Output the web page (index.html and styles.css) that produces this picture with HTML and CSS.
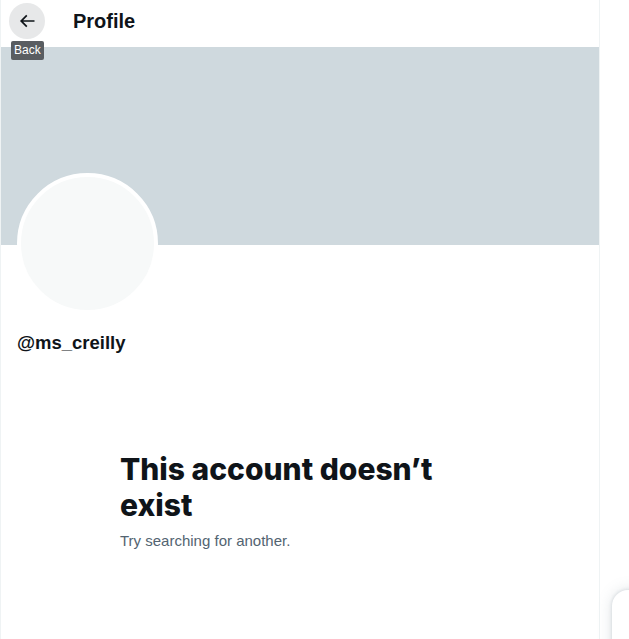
FILE: index.html
```html
<!DOCTYPE html>
<html>
<head>
<meta charset="utf-8">
<link rel="stylesheet" href="styles.css">
</head>
<body>
<div class="page">
  <main class="column">
    <header class="topbar">
      <div class="back-btn">
        <svg viewBox="0 0 24 24" width="20" height="20"><path d="M7.414 13l5.043 5.04-1.414 1.42L3.586 12l7.457-7.46 1.414 1.42L7.414 11H21v2H7.414z" fill="#0f1419"/></svg>
      </div>
      <h2 class="title">Profile</h2>
      <div class="tooltip">Back</div>
    </header>
    <div class="banner"></div>
    <div class="avatar-row">
      <div class="avatar"></div>
    </div>
    <div class="handle">@ms_creilly</div>
    <section class="empty">
      <h1 class="empty-title">This account doesn’t exist</h1>
      <p class="empty-sub">Try searching for another.</p>
    </section>
  </main>
  <div class="drawer"></div>
</div>
</body>
</html>
```

FILE: styles.css
```css
html, body {
  margin: 0;
  padding: 0;
  background: #ffffff;
  overflow: hidden;
  height: 639px;
}
body {
  font-family: "Liberation Sans", Arial, sans-serif;
  color: #0f1419;
}
.page {
  display: flex;
  height: 639px;
}
.column {
  width: 598px;
  border-left: 1px solid #eff3f4;
  border-right: 1px solid #eff3f4;
  display: flex;
  flex-direction: column;
}
.topbar {
  position: relative;
  height: 47px;
  display: flex;
  align-items: center;
  padding-left: 8px;
}
.back-btn {
  width: 36px;
  height: 36px;
  border-radius: 50%;
  background: #e7e8e9;
  display: flex;
  align-items: center;
  justify-content: center;
  margin-top: -6px;
}
.title {
  margin: -6px 0 0 28px;
  font-size: 20px;
  font-weight: 700;
  line-height: 24px;
}
.tooltip {
  position: absolute;
  left: 10px;
  top: 41px;
  z-index: 2;
  background: #595d61;
  color: #ffffff;
  font-size: 12px;
  line-height: 19px;
  padding: 0 3px;
  border-radius: 2px;
  height: 19px;
}
.banner {
  height: 198px;
  background: #cfd9de;
}
.avatar-row {
  padding-left: 16px;
  height: 68px;
}
.avatar {
  width: 133px;
  height: 133px;
  border: 4px solid #ffffff;
  border-radius: 50%;
  background: #f7f9f9;
  margin-top: -72px;
}
.handle {
  padding-left: 16px;
  margin-top: 18px;
  font-size: 18.5px;
  font-weight: 700;
  line-height: 24px;
}
.empty {
  width: 360px;
  margin: 0 auto;
  padding-top: 96px;
}
.empty-title {
  margin: 0 0 8px 0;
  font-family: Inter, "Liberation Sans", sans-serif;
  font-size: 30px;
  font-weight: 800;
  line-height: 36px;
}
.empty-sub {
  margin: 0;
  font-size: 15px;
  line-height: 20px;
  color: #536471;
}
.drawer {
  position: absolute;
  left: 612px;
  top: 590px;
  width: 400px;
  height: 100px;
  background: #ffffff;
  border-radius: 16px 16px 0 0;
  box-shadow: rgba(101,119,134,0.2) 0 0 15px, rgba(101,119,134,0.15) 0 0 3px 1px;
}
```
